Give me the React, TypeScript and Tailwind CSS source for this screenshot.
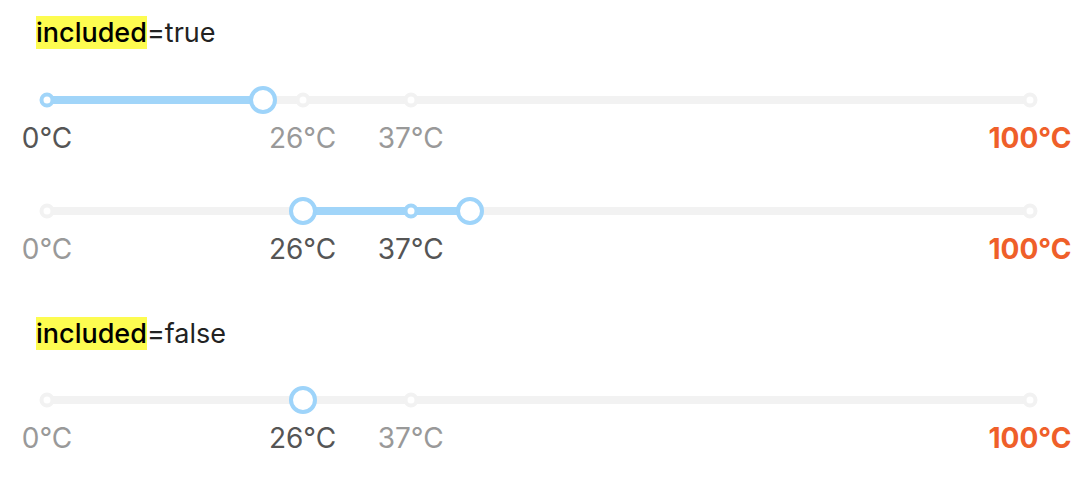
const marks = [
  { value: 0, label: "0°C" },
  { value: 26, label: "26°C" },
  { value: 37, label: "37°C" },
  { value: 100, label: "100°C", strong: true },
];

type SliderProps = {
  values: number[];
  included: boolean;
  range?: boolean;
};

function MarkSlider({ values, included, range }: SliderProps) {
  const lo = range ? values[0] : 0;
  const hi = values[values.length - 1];
  const active = (v: number) => (included ? v >= lo && v <= hi : v === hi);

  return (
    <div className="relative h-[8px] w-[983px] rounded-full bg-[#f2f2f2]">
      {included && (
        <div
          className="absolute top-0 h-[8px] rounded-full bg-[#a1d5f9]"
          style={{ left: `${lo}%`, width: `${hi - lo}%` }}
        />
      )}
      {marks.map((m) => (
        <div
          key={m.value}
          className={`absolute top-1/2 h-[15px] w-[15px] -translate-x-1/2 -translate-y-1/2 rounded-full border-[4px] bg-white ${
            included && m.value >= lo && m.value <= hi ? "border-[#a1d5f9]" : "border-[#f2f2f2]"
          }`}
          style={{ left: `${m.value}%` }}
        />
      ))}
      {values.map((v, i) => (
        <div
          key={i}
          className="absolute top-1/2 h-[28px] w-[28px] -translate-x-1/2 -translate-y-1/2 rounded-full border-[4px] border-[#9ed4fa] bg-white"
          style={{ left: `${v}%` }}
        />
      ))}
      {marks.map((m) => (
        <span
          key={m.value}
          className={`absolute top-[26px] -translate-x-1/2 whitespace-nowrap text-[28px] leading-[32px] ${
            m.strong ? "font-bold text-[#ef5f2a]" : active(m.value) ? "text-[#555555]" : "text-[#999999]"
          }`}
          style={{ left: `${m.value}%` }}
        >
          {m.label}
        </span>
      ))}
    </div>
  );
}

function Title({ value }: { value: string }) {
  return (
    <p className="pl-[36px] text-[27px] leading-[33px] text-[#222222]">
      <span className="bg-[#fdfc50] font-medium text-black">included</span>={value}
    </p>
  );
}

export default function App() {
  return (
    <div
      className="flex h-[502px] w-[1088px] flex-col bg-white pt-[16px]"
      style={{ fontFamily: "Inter, 'Liberation Sans', sans-serif" }}
    >
      <Title value="true" />
      <div className="flex flex-col gap-[103px] pl-[47px] pt-[47px]">
        <MarkSlider values={[22]} included />
        <MarkSlider values={[26, 43]} included range />
      </div>
      <div className="pt-[102px]">
        <Title value="false" />
      </div>
      <div className="pl-[47px] pt-[46px]">
        <MarkSlider values={[26]} included={false} />
      </div>
    </div>
  );
}
